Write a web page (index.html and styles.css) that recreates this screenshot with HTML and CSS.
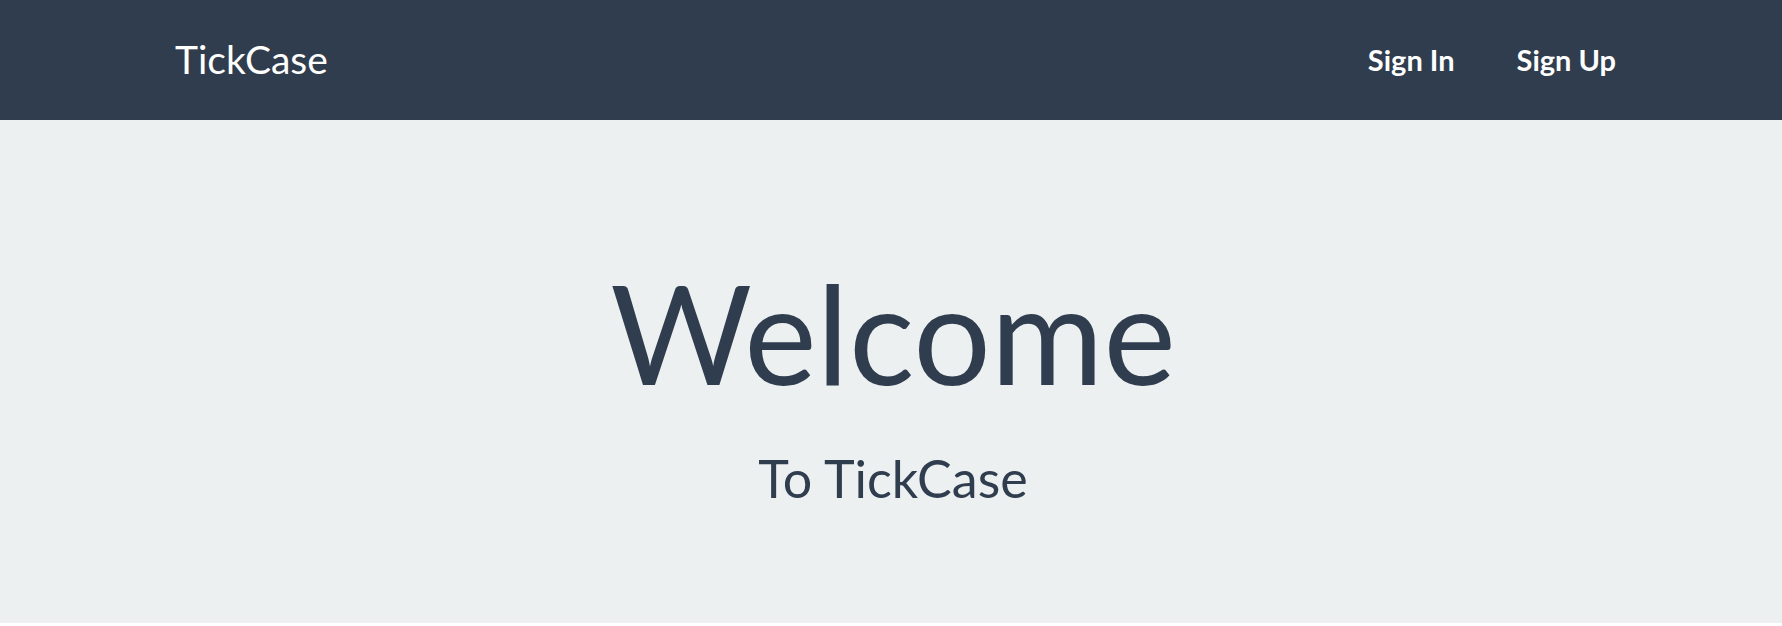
FILE: index.html
```html
<!DOCTYPE html>
<html lang="en">
<head>
<meta charset="utf-8">
<title>TickCase</title>
<link rel="stylesheet" href="styles.css">
</head>
<body>
<nav class="navbar">
  <a class="brand" href="#">TickCase</a>
  <ul class="nav">
    <li><a class="nav-link" href="#">Sign In</a></li>
    <li><a class="nav-link" href="#">Sign Up</a></li>
  </ul>
</nav>
<section class="hero">
  <h1 class="hero-title">Welcome</h1>
  <h3 class="hero-sub">To TickCase</h3>
</section>
</body>
</html>
```
FILE: styles.css
```css
* { box-sizing: border-box; }
html, body {
  margin: 0;
  padding: 0;
  background: #ffffff;
  font-family: Lato, "Open Sans", "Liberation Sans", sans-serif;
  color: #2f3d4e;
}
.navbar {
  height: 120px;
  background: #2f3d4e;
  display: flex;
  align-items: center;
  justify-content: space-between;
  padding: 0 135px 0 175px;
}
.brand {
  color: #ffffff;
  text-decoration: none;
  font-size: 39px;
  font-weight: 400;
  line-height: 1;
  margin-top: -2px;
}
.nav {
  list-style: none;
  display: flex;
  margin: 0;
  padding: 0;
}
.nav-link {
  display: block;
  color: #ffffff;
  text-decoration: none;
  font-size: 29px;
  font-weight: 700;
  line-height: 1;
  padding: 0 31px;
  margin-top: -2px;
}
.hero {
  background: #ecf0f1;
  text-align: center;
  padding: 137px 0 116px 4px;
}
.hero-title {
  margin: 0;
  font-size: 137px;
  font-weight: 400;
  line-height: 1.1;
}
.hero-sub {
  margin: 42px 0 0;
  font-size: 52px;
  font-weight: 400;
  line-height: 1.1;
}
```
